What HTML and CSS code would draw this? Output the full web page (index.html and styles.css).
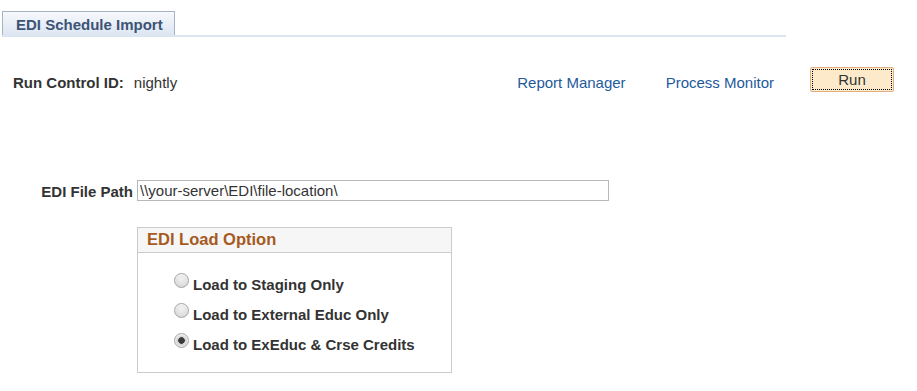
FILE: index.html
```html
<!DOCTYPE html>
<html lang="en">
  <head>
    <meta charset="UTF-8" />
    <meta name="viewport" content="width=device-width, initial-scale=1.0" />
    <title>EDI Schedule Import</title>
    <link rel="stylesheet" href="styles.css">
  </head>
  <body>
    <div class="tab-bar">
      <div class="tab">EDI Schedule Import</div>
    </div>

    <div class="run-row">
      <span class="run-label">Run Control ID:</span>
      <span class="run-value">nightly</span>
      <div class="run-links">
        <a href="#" class="link">Report Manager</a>
        <a href="#" class="link">Process Monitor</a>
        <button type="button" class="run-button">Run</button>
      </div>
    </div>

    <div class="path-row">
      <label class="path-label" for="filePath">EDI File Path</label>
      <input type="text" id="filePath" class="path-input" value="\\your-server\EDI\file-location\" />
    </div>

    <div class="group-box">
      <div class="group-header">EDI Load Option</div>
      <div class="group-body">
        <div class="option">
          <span class="radio"></span>
          <span class="option-label">Load to Staging Only</span>
        </div>
        <div class="option">
          <span class="radio"></span>
          <span class="option-label">Load to External Educ Only</span>
        </div>
        <div class="option">
          <span class="radio checked"></span>
          <span class="option-label">Load to ExEduc &amp; Crse Credits</span>
        </div>
      </div>
    </div>
  </body>
</html>
```

FILE: styles.css
```css
body {
  font-family: "Liberation Sans", Arial, sans-serif;
  font-size: 15px;
  line-height: 17px;
  color: #333;
  margin: 0;
  background-color: #fff;
}
.tab-bar {
  width: 784px;
  margin-left: 2px;
  padding-top: 11px;
  border-bottom: 2px solid #dbe5f2;
}
.tab {
  display: inline-block;
  vertical-align: bottom;
  padding: 4px 11px 2px 13px;
  border: 1px solid #a6b3c7;
  border-bottom: none;
  background: linear-gradient(#f6f8fc, #dde6f2);
  color: #3d5375;
  font-weight: bold;
}
.run-row {
  display: flex;
  align-items: flex-start;
  padding-top: 30px;
  padding-left: 13px;
}
.run-label {
  margin-top: 7px;
  margin-right: 10px;
  font-weight: bold;
}
.run-value {
  margin-top: 7px;
}
.run-links {
  display: flex;
  align-items: flex-start;
  margin-left: auto;
  margin-right: 23px;
}
.link {
  margin-top: 7px;
  color: #1e5a9b;
  text-decoration: none;
}
.link + .link {
  margin-left: 40px;
}
.run-button {
  margin-left: 36px;
  width: 84px;
  height: 25px;
  padding: 0;
  font-family: inherit;
  font-size: 15px;
  line-height: 17px;
  color: #333;
  background-color: #fdeacb;
  border: 1px solid #e0b17e;
  border-radius: 2px;
  outline: 1px dotted #000;
  outline-offset: -3px;
}
.path-row {
  display: flex;
  align-items: flex-start;
  margin-top: 88px;
}
.path-label {
  width: 133px;
  margin-top: 3px;
  margin-right: 4px;
  text-align: right;
  font-weight: bold;
}
.path-input {
  box-sizing: border-box;
  width: 472px;
  height: 21px;
  margin: 0;
  padding: 0 2px;
  font-family: inherit;
  font-size: 15px;
  color: #333;
  border: 1px solid #b8b8b8;
  border-radius: 0;
}
.group-box {
  box-sizing: border-box;
  width: 315px;
  margin: 26px 0 0 137px;
  border: 1px solid #cbcbcb;
}
.group-header {
  height: 19px;
  padding: 2px 9px 3px;
  background-color: #f6f6f6;
  border-bottom: 1px solid #cbcbcb;
  color: #a65a1f;
  font-size: 16.5px;
  line-height: 19px;
  font-weight: bold;
}
.group-body {
  padding: 16px 0 13px 36px;
}
.option {
  display: flex;
  align-items: flex-start;
  height: 30px;
}
.radio {
  box-sizing: border-box;
  width: 15px;
  height: 15px;
  margin-top: 4px;
  margin-right: 4px;
  border: 1px solid #a4a4a4;
  border-radius: 50%;
  background: radial-gradient(circle at 50% 35%, #f2f2f2, #d2d2d2);
  box-shadow: inset 0 1px 1px rgba(255, 255, 255, 0.8);
}
.radio.checked {
  background: radial-gradient(circle, #3c3c3c 0, #3c3c3c 3px, #d2d2d2 3.6px, #ececec 7px);
}
.option-label {
  margin-top: 7px;
  font-weight: bold;
}
```
